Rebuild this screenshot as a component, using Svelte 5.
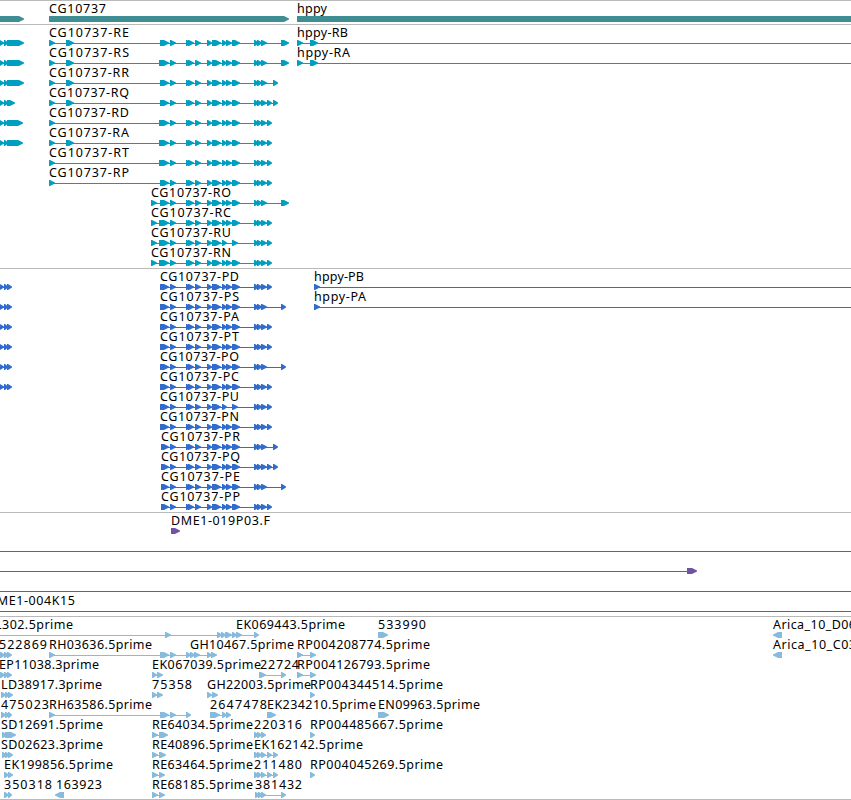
<script lang="ts">
  // exon: [start, end], label: [text, start, end]
  type Exon = [number, number];
  type Feature = {
    label?: [string, number, number];
    exons?: Exon[];
    line?: Exon;
    reverse?: boolean;
  };
  type Track = { name: string; rows: Feature[][] };

  const WIDTH = 851;

  const pair = (a: number, b: number, c: number): Exon[] => [[a, a + 5], [b, c]];
  const triple = (a: number, b: number, c: number, d: number): Exon[] => [[a, a + 5], [b, b + 5], [c, d]];

  // exons shared by every CG10737 isoform
  function core(start: number, short = false): Exon[] {
    return [
      [start, 169], [170, 176],
      [186, 191], [188, 194], [195, 201],
      [207, 212], [212, 221],
      [222, 227], ...(short ? [] : [[226, 232] as Exon]),
      [232, short ? 238 : 240],
      [254, 259], [257, 262], [261, 267]
    ];
  }

  const tails: Record<string, Exon[]> = {
    long: [[281, 289]],
    mid: [[273, 278]],
    both: [[267, 272], [273, 278]],
    near: [[267, 272]],
    far: [[281, 286]]
  };

  const head: Exon[] = [[49, 55]];
  const head2: Exon[] = [[49, 55], [66, 74]];
  const inner: Exon[] = [[151, 157]];

  function isoform(id: string, x: number, first: Exon[], start: number, tail: string): Feature {
    return {
      label: ['CG10737-' + id, x, x + (id[0] === 'R' ? 80 : 79)],
      exons: [...first, ...core(start, id[1] === 'U'), ...tails[tail]]
    };
  }

  const left = (end: number): Feature => ({ exons: [[-1, 4], [4, 8], [7, end]] });

  const transcripts: Feature[][] = [
    [left(24), isoform('RE', 49, head2, 160, 'long'), { label: ['hppy-RB', 297, 348], exons: [[297, 303], [310, 318]], line: [297, WIDTH] }],
    [left(24), isoform('RS', 49, head2, 159, 'long'), { label: ['hppy-RA', 297, 350], exons: [[297, 303], [310, 318]], line: [297, WIDTH] }],
    [left(24), isoform('RR', 49, head2, 160, 'mid')],
    [left(15), isoform('RQ', 49, head2, 160, 'both')],
    [left(23), isoform('RD', 49, head, 159, 'near')],
    [left(23), isoform('RA', 49, head2, 159, 'near')],
    [isoform('RT', 49, head, 159, 'near')],
    [isoform('RP', 49, head, 160, 'near')],
    [isoform('RO', 151, inner, 160, 'long')],
    [isoform('RC', 151, inner, 159, 'near')],
    [isoform('RU', 151, inner, 159, 'near')],
    [isoform('RN', 151, inner, 159, 'near')]
  ];

  const proteinTails: [string, string][] = [
    ['PD', 'near'], ['PS', 'far'], ['PA', 'near'], ['PT', 'near'],
    ['PO', 'far'], ['PC', 'near'], ['PU', 'near'], ['PN', 'near'],
    ['PR', 'mid'], ['PQ', 'both'], ['PE', 'far'], ['PP', 'near']
  ];

  const proteins: Feature[][] = proteinTails.map(([id, tail], i) => {
    const x = i < 8 ? 160 : 161;
    const row = [isoform(id, x, [], x, tail)];
    if (i < 6) row.push(left(12));
    if (i < 2) {
      row.push({ label: [i ? 'hppy-PA' : 'hppy-PB', 314, i ? 366 : 364], exons: [[314, 320]], line: [314, WIDTH] });
    }
    return row;
  });

  const ests: Feature[][] = [
    [
      { label: ['L302.5prime', -5, 73], line: [0, 256], exons: [[165, 171], ...triple(217, 221, 225, 230), [226, 232], ...pair(232, 236, 242), [254, 259]] },
      { label: ['EK069443.5prime', 236, 345] },
      { label: ['533990', 378, 426], exons: [[378, 388]] },
      { label: ['Arica_10_D06', 773, 856], exons: [[773, 782]], reverse: true }
    ],
    [
      { label: ['522869', -1, 47], exons: triple(0, 4, 7, 12) },
      { label: ['RH03636.5prime', 49, 152], exons: [[49, 55], [160, 169], [170, 176], ...triple(186, 190, 194, 200), ...pair(207, 211, 217)] },
      { label: ['GH10467.5prime', 190, 294] },
      { label: ['RP004208774.5prime', 297, 430], exons: [[297, 303], [310, 316]] },
      { label: ['Arica_10_C03', 773, 856], exons: [[773, 782]], reverse: true }
    ],
    [
      { label: ['EP11038.3prime', -1, 99], exons: triple(0, 4, 7, 12) },
      { label: ['EK067039.5prime', 152, 261], exons: pair(152, 157, 163) },
      { label: ['22724', 260, 299], exons: [[259, 266], [281, 286]] },
      { label: ['RP004126793.5prime', 297, 430], exons: [[297, 303], [310, 316]] }
    ],
    [
      { label: ['LD38917.3prime', 1, 102], exons: triple(1, 5, 8, 13) },
      { label: ['75358', 152, 192], exons: pair(152, 157, 163) },
      { label: ['GH22003.5prime', 207, 311], exons: pair(207, 212, 218) },
      { label: ['RP004344514.5prime', 310, 443], exons: [[310, 315]] }
    ],
    [
      { label: ['475023', 1, 49], exons: triple(1, 5, 8, 12) },
      { label: ['RH63586.5prime', 49, 152], exons: [[49, 55], [160, 169], [170, 176], [186, 191]] },
      { label: ['2647478', 210, 267], exons: [[210, 220], ...pair(222, 226, 231)] },
      { label: ['EK234210.5prime', 267, 376], exons: [[267, 276]] },
      { label: ['EN09963.5prime', 378, 480], exons: [[378, 389]] }
    ],
    [
      { label: ['SD12691.5prime', 1, 103], exons: pair(2, 5, 16) },
      { label: ['RE64034.5prime', 152, 253], exons: [[152, 158], [159, 168]] },
      { label: ['220316', 254, 302], exons: triple(254, 257, 261, 266) },
      { label: ['RP004485667.5prime', 310, 443], exons: [[310, 315]] }
    ],
    [
      { label: ['SD02623.3prime', 1, 103], exons: triple(2, 5, 8, 13) },
      { label: ['RE40896.5prime', 152, 253], exons: [[152, 158], [159, 166]] },
      { label: ['EK162142.5prime', 254, 363], exons: [...triple(254, 257, 261, 266), [267, 272], [273, 278]] }
    ],
    [
      { label: ['EK199856.5prime', 4, 113], exons: pair(4, 8, 13) },
      { label: ['RE63464.5prime', 152, 253], exons: [[152, 158], [159, 165]] },
      { label: ['211480', 254, 302], exons: [...triple(254, 257, 261, 266), [267, 272], [273, 278]] },
      { label: ['RP004045269.5prime', 310, 443], exons: [[310, 315]] }
    ],
    [
      { label: ['350318', 4, 52], exons: pair(4, 8, 12) },
      { label: ['163923', 56, 102], exons: [[55, 64]], reverse: true },
      { label: ['RE68185.5prime', 152, 253], exons: [[152, 158], [159, 165]] },
      { label: ['381432', 255, 302], exons: [...triple(255, 258, 261, 266), [281, 286]] }
    ]
  ];

  const tracks: Track[] = [
    {
      name: 'gene',
      rows: [[
        { exons: [[-10, 24]] },
        { label: ['CG10737', 49, 106], exons: [[49, 289]] },
        { label: ['hppy', 297, 327], exons: [[297, 870]] }
      ]]
    },
    { name: 'transcript', rows: transcripts },
    { name: 'protein', rows: proteins },
    {
      name: 'bac',
      rows: [
        [{ label: ['DME1-019P03.F', 171, 270], exons: [[171, 180]] }],
        [{ line: [0, WIDTH] }],
        [{ line: [0, 690], exons: [[687, 697]] }],
        [{ line: [0, WIDTH] }],
        [{ label: ['DME1-004K15', -13, 75], line: [0, WIDTH] }]
      ]
    },
    { name: 'est', rows: ests }
  ];

  function arrow([a, b]: Exon, reverse = false) {
    const tip = Math.min(5, b - a - 1);
    if (reverse) {
      return `${b},14 ${a + tip},14 ${a},16.4 ${a},17.4 ${a + tip},20 ${b},20`;
    }
    return `${a},14 ${b - tip},14 ${b},16.4 ${b},17.4 ${b - tip},20 ${a},20`;
  }

  function span(f: Feature): Exon | null {
    if (f.line) return f.line;
    if (!f.exons || f.exons.length < 2) return null;
    return [f.exons[0][0], f.exons[f.exons.length - 1][1] - 2];
  }
</script>

<main class="browser">
  {#each tracks as track}
    <section class="track {track.name}">
      {#each track.rows as row}
        <svg class="row" width={WIDTH} height="20">
          {#each row as feature}
            {@const s = span(feature)}
            {#if s}
              <rect x={s[0]} y="17" width={s[1] - s[0]} height="1" />
            {/if}
            {#each feature.exons ?? [] as exon}
              <polygon points={arrow(exon, feature.reverse)} />
            {/each}
            {#if feature.label}
              <text x={feature.label[1]} y="11" textLength={feature.label[2] - feature.label[1]}>{feature.label[0]}</text>
            {/if}
          {/each}
        </svg>
      {/each}
    </section>
  {/each}
</main>

<style>
  :global(body) {
    background: #fff;
  }

  .browser {
    width: 851px;
    height: 800px;
    box-sizing: border-box;
    overflow: hidden;
    border-bottom: 1px solid #b9b9b9;
  }

  .track {
    display: flex;
    flex-direction: column;
    border-top: 1px solid #b9b9b9;
    padding: 1px 0 2px;
  }

  .track:last-child {
    padding-bottom: 1px;
  }

  .row {
    display: block;
    flex: none;
    overflow: visible;
  }

  text {
    font-family: 'Noto Sans', 'DejaVu Sans', sans-serif;
    font-size: 12.5px;
    fill: #000;
  }

  .gene {
    fill: #3f8e94;
  }

  .transcript {
    fill: #009fbf;
  }

  .protein {
    fill: #316ccd;
  }

  .bac {
    fill: #7153a5;
  }

  .est {
    fill: #87bbdd;
  }
</style>
